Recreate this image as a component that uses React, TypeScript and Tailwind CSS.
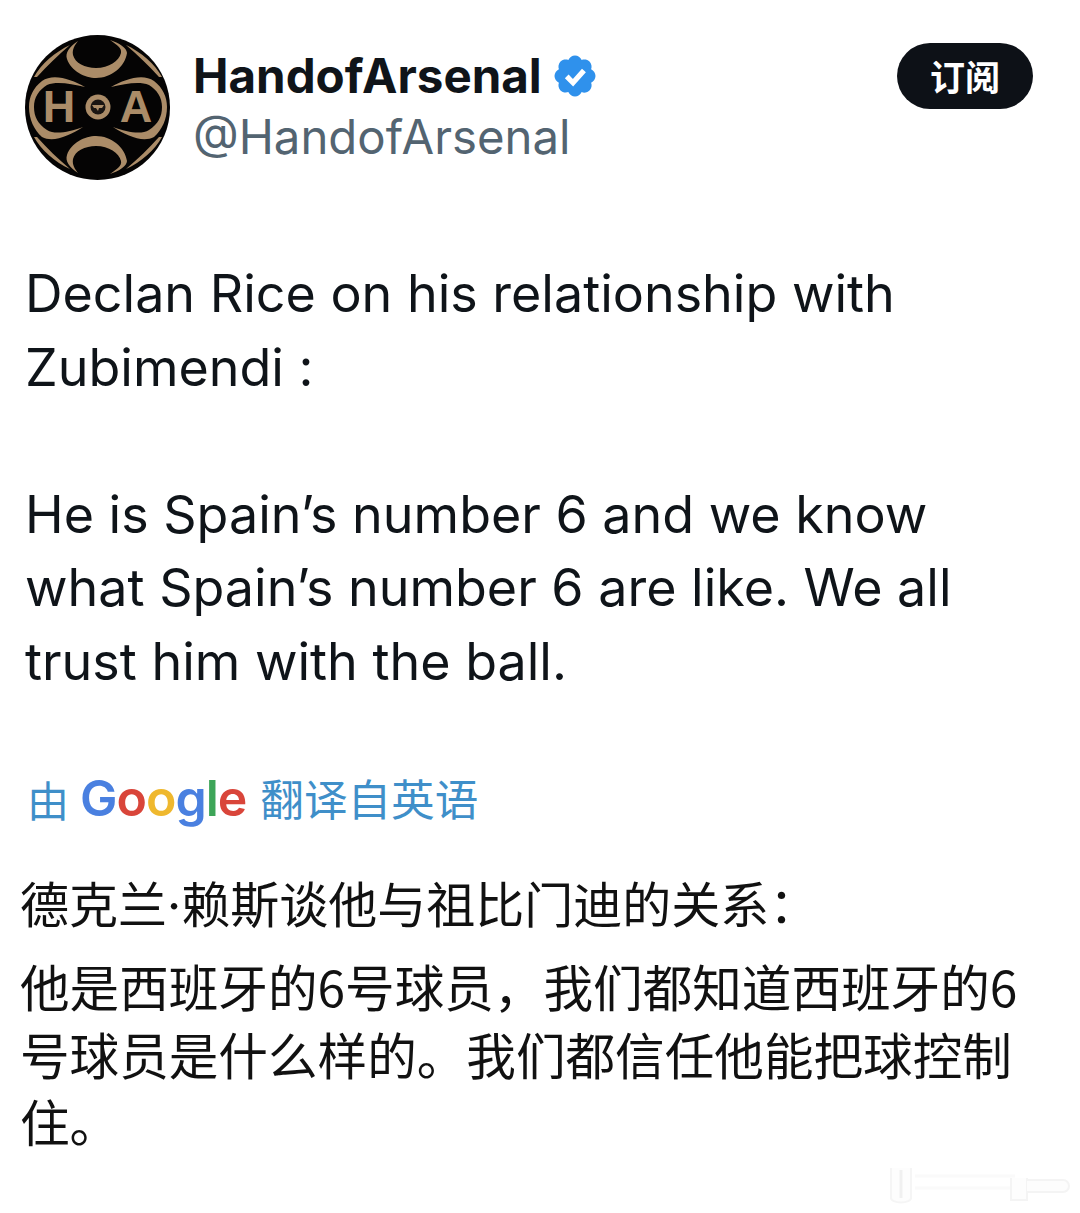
const latin = "font-['Inter','Noto_Sans_CJK_SC',sans-serif]";
const cjk = "font-['Noto_Sans_CJK_SC',sans-serif]";

function Avatar() {
  const crescent =
    "M53 6 C44 12 40 18 42 24 C46 36 60 43 71 43 C86 43 100 32 102 18 C102 13 94 8 85 5 C92 10 97 13 96 18 C94 26 84 33 71 33 C60 33 50 28 48 20 C47 14 50 10 53 6Z";
  const wing =
    "M60 52 C46 44 28 38 17 46 C8 53 4 62 4 72 C4 84 9 95 17 102 C28 108 44 101 58 92 C44 97 30 100 22 95 C13 89 9 82 9 72 C9 62 14 55 22 50 C32 46 46 49 60 52Z";
  const stripe = "M9 42 C16 29 30 17 45 10 C33 20 22 31 12 42Z";
  return (
    <svg viewBox="0 0 145 145" className="w-[145px] h-[145px] shrink-0">
      <circle cx="72.5" cy="72.5" r="72.5" fill="#050404" />
      <g fill="#ab8c68">
        <path d={crescent} />
        <path d={crescent} transform="matrix(1 0 0 -1 0 144)" />
        <path d={wing} />
        <path d={wing} transform="matrix(-1 0 0 1 146 0)" />
        <path d={stripe} />
        <path d={stripe} transform="matrix(-1 0 0 1 146 0)" />
        <path d={stripe} transform="matrix(1 0 0 -1 0 144)" />
        <path d={stripe} transform="matrix(-1 0 0 -1 146 144)" />
        <circle cx="73" cy="72" r="12.5" />
      </g>
      <circle cx="73" cy="72" r="7.5" fill="#1a1512" />
      <path d="M67 70 h12 l-2 3 h-3 l-1 3 l-2 -3 h-2z" fill="#ab8c68" />
      <text x="34" y="87" textAnchor="middle" fill="#ab8c68" fontFamily="Liberation Sans" fontWeight="700" fontSize="45">H</text>
      <text x="111" y="87" textAnchor="middle" fill="#ab8c68" fontFamily="Liberation Sans" fontWeight="700" fontSize="45">A</text>
    </svg>
  );
}

function Verified() {
  return (
    <svg viewBox="0 0 22 22" className="w-[48px] h-[48px] shrink-0">
      <path
        fill="#2f91ec"
        d="M20.396 11c-.018-.646-.215-1.275-.57-1.816-.354-.54-.852-.972-1.438-1.246.223-.607.27-1.264.14-1.897-.131-.634-.437-1.218-.882-1.687-.47-.445-1.053-.75-1.687-.882-.633-.13-1.29-.083-1.897.14-.273-.587-.704-1.086-1.245-1.44S11.647 1.62 11 1.604c-.646.017-1.273.213-1.813.568s-.969.854-1.24 1.44c-.608-.223-1.267-.272-1.902-.14-.635.13-1.22.436-1.69.882-.445.47-.749 1.055-.878 1.688-.13.633-.08 1.29.144 1.896-.587.274-1.087.705-1.443 1.245-.356.54-.555 1.17-.574 1.817.02.647.218 1.276.574 1.817.356.54.856.972 1.443 1.245-.224.606-.274 1.263-.144 1.896.13.634.433 1.218.877 1.688.47.443 1.054.747 1.687.878.633.132 1.29.084 1.897-.136.274.586.705 1.084 1.246 1.439.54.354 1.17.551 1.816.569.647-.016 1.276-.213 1.817-.567s.972-.854 1.245-1.44c.604.239 1.266.296 1.903.164.636-.132 1.22-.447 1.68-.907.46-.46.776-1.044.908-1.681s.075-1.299-.165-1.903c.586-.274 1.084-.705 1.439-1.246.354-.54.551-1.17.569-1.816z"
      />
      <path fill="none" stroke="#fff" strokeWidth="2.4" d="M7.2 11.2l2.9 2.9 5-5.6" />
    </svg>
  );
}

function Watermark() {
  return (
    <svg viewBox="0 0 190 40" className="absolute left-[885px] top-[1166px] w-[190px] h-[40px]">
      <path d="M6 2v30a9 4 0 0 0 20 0V2" fill="#fdfdfd" stroke="#f5f5f5" strokeWidth="2" />
      <path d="M16 4v28" stroke="#f0f0f0" strokeWidth="3" />
      <path d="M30 10h100M30 22h100" stroke="#fafafa" strokeWidth="3" />
      <path d="M126 12v22h16V12" fill="#fdfdfd" stroke="#f4f4f4" strokeWidth="2" />
      <path d="M142 14h36a6 6 0 0 1 0 12h-36" fill="#fdfdfd" stroke="#f4f4f4" strokeWidth="2" />
    </svg>
  );
}

export default function App() {
  return (
    <div className="relative w-[1080px] h-[1213px] bg-white overflow-hidden text-[#0f1419]">
      <div className="flex items-start pl-[25px] pr-[47px] pt-[35px]">
        <Avatar />
        <div className={`ml-[23px] flex-1 ${latin}`}>
          <div className="flex items-center h-[80px] mt-[1px] gap-[9px]">
            <span className="text-[47.5px] font-bold leading-none">HandofArsenal</span>
            <Verified />
          </div>
          <div className="text-[47.3px] leading-[42px] text-[#536471]">@HandofArsenal</div>
        </div>
        <div className={`mt-[8px] w-[136px] h-[66px] rounded-full bg-[#0d1117] text-white flex items-center justify-center text-[35px] font-bold ${cjk}`}>
          订阅
        </div>
      </div>

      <div className={`pl-[25px] pt-[77px] text-[52px] leading-[73.5px] text-[#0f1419] ${latin}`}>
        <p>Declan Rice on his relationship with</p>
        <p>Zubimendi :</p>
        <p className="mt-[73.5px]">He is Spain’s number 6 and we know</p>
        <p>what Spain’s number 6 are like. We all</p>
        <p>trust him with the ball.</p>
      </div>

      <div className={`flex items-center pl-[27px] mt-[65px] h-[70px] text-[#3f8fc9] text-[42px] ${cjk}`}>
        <span>由</span>
        <span className="ml-[11px] text-[50px] tracking-[-1px] font-['Inter',sans-serif] font-semibold leading-none">
          <span className="text-[#4a80e0]">G</span>
          <span className="text-[#d9453a]">o</span>
          <span className="text-[#efb82e]">o</span>
          <span className="text-[#4a80e0]">g</span>
          <span className="text-[#3da558]">l</span>
          <span className="text-[#d9453a]">e</span>
        </span>
        <span className="ml-[14px] text-[43.6px]">翻译自英语</span>
      </div>

      <div className={`pl-[20px] pr-[40px] text-[#111] text-[49.6px] ${cjk}`}>
        <p className="mt-[35px] leading-[68px] text-[49px]">
          德克兰<span className="font-['Inter',sans-serif]">·</span>赖斯谈他与祖比门迪的关系：
        </p>
        <p className="mt-[12px] leading-[67.5px]">他是西班牙的6号球员，我们都知道西班牙的6号球员是什么样的。我们都信任他能把球控制住。</p>
      </div>

      <Watermark />
    </div>
  );
}
